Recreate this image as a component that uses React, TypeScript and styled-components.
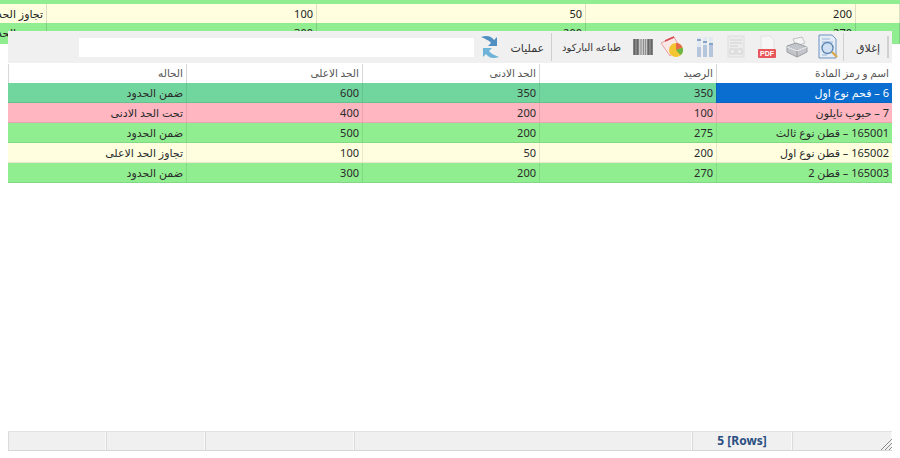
import React from "react";
import styled, { createGlobalStyle } from "styled-components";

const GlobalStyle = createGlobalStyle`
  html, body {
    margin: 0;
    padding: 0;
    background: #ffffff;
  }
  body {
    width: 900px;
    height: 458px;
    overflow: hidden;
    font-family: "Noto Sans", "DejaVu Sans", sans-serif;
    font-size: 11px;
    color: #222;
  }
`;

type Tone = "green" | "yellow" | "pink" | "selected";

const toneColor: Record<Tone, string> = {
  green: "#90ee90",
  yellow: "#ffffe0",
  pink: "#ffb6c1",
  selected: "#71d59e",
};

const rows: { tone: Tone; cells: string[] }[] = [
  { tone: "selected", cells: ["6 – فحم نوع اول", "350", "350", "600", "ضمن الحدود"] },
  { tone: "pink", cells: ["7 – حبوب نايلون", "100", "200", "400", "تحت الحد الادنى"] },
  { tone: "green", cells: ["165001 – قطن نوع ثالث", "275", "200", "500", "ضمن الحدود"] },
  { tone: "yellow", cells: ["165002 – قطن نوع اول", "200", "50", "100", "تجاوز الحد الاعلى"] },
  { tone: "green", cells: ["165003 – قطن 2", "270", "200", "300", "ضمن الحدود"] },
];

const headers = ["اسم و رمز المادة", "الرصيد", "الحد الادنى", "الحد الاعلى", "الحاله"];

const Desktop = styled.div`
  position: relative;
  width: 900px;
  height: 458px;
  overflow: hidden;
`;

const BackGreen = styled.div`
  height: 4px;
  background: #90ee90;
`;

const BackRow = styled.div<{ $tone: Tone; $h: number }>`
  display: grid;
  grid-template-columns: 47px 270px 269px 270px 44px;
  direction: ltr;
  height: ${(p) => p.$h}px;
  background: ${(p) => toneColor[p.$tone]};
`;

const BackCell = styled.div`
  border-right: 1px solid rgba(0, 0, 0, 0.13);
  padding-right: 3px;
  text-align: right;
  line-height: 19px;
  white-space: nowrap;
  overflow: hidden;
  font-size: 11px;
`;

const BackStatus = styled(BackCell)`
  direction: rtl;
  text-align: right;
`;

const Window = styled.div`
  position: absolute;
  left: 8px;
  top: 31px;
  width: 884px;
  height: 420px;
  background: #ffffff;
  display: flex;
  flex-direction: column;
  direction: rtl;
`;

const Toolbar = styled.div`
  display: flex;
  align-items: center;
  height: 32px;
  background: #f0f0f0;
  padding-right: 3px;
  flex-shrink: 0;
`;

const Grip = styled.span`
  width: 2px;
  height: 22px;
  background: #d0d0d0;
  flex-shrink: 0;
`;

const ToolText = styled.span`
  padding: 0 7px;
  white-space: nowrap;
  font-size: 11px;
  color: #333;
`;

const CloseText = styled(ToolText)`
  padding-left: 12px;
`;

const BarcodeText = styled(ToolText)`
  font-size: 10px;
  width: 60px;
  padding: 0 8px 0 9px;
  flex-shrink: 0;
`;

const Sep = styled.span`
  width: 1px;
  height: 28px;
  background: #cfcfcf;
  flex-shrink: 0;
`;

const IconSlot = styled.span<{ $w: number }>`
  display: inline-flex;
  justify-content: center;
  align-items: center;
  width: ${(p) => p.$w}px;
  height: 30px;
  flex-shrink: 0;
`;

const SearchInput = styled.div`
  width: 395px;
  height: 19px;
  margin-right: 3px;
  background: #ffffff;
`;

const Grid = styled.div`
  display: grid;
  grid-template-columns: 176px 177px 177px 176px 178px;
  flex-shrink: 0;
  margin-top: 1px;
`;

const Head = styled.div`
  height: 19px;
  line-height: 19px;
  padding-right: 3px;
  border-left: 1px solid #d8d8d8;
  font-size: 10.5px;
  color: #555;
  white-space: nowrap;
  &:last-child {
    border-left: none;
  }
`;

const Cell = styled.div<{ $tone: Tone; $active?: boolean }>`
  height: 20px;
  line-height: 19px;
  padding-right: 3px;
  box-sizing: border-box;
  background: ${(p) => (p.$active ? "#0a6ed1" : toneColor[p.$tone])};
  color: ${(p) => (p.$active ? "#ffffff" : "#2a2a2a")};
  border-left: 1px solid rgba(0, 0, 0, 0.09);
  border-bottom: 1px solid rgba(0, 0, 0, 0.09);
  white-space: nowrap;
  font-size: 11px;
  &:nth-child(5n) {
    border-left: none;
  }
`;

const Spacer = styled.div`
  flex: 1;
`;

const StatusBar = styled.div`
  display: grid;
  grid-template-columns: 100px 100px 338px 149px 99px 98px;
  direction: rtl;
  height: 20px;
  flex-shrink: 0;
  background: #f0f0f0;
  border-top: 1px solid #e2e2e2;
  border-bottom: 1px solid #d6d6d6;
  box-sizing: border-box;
  position: relative;
`;

const StatusCell = styled.div`
  border-left: 1px solid #dadada;
  border-right: 1px solid #fafafa;
  text-align: center;
  line-height: 18px;
  font-size: 12px;
  font-weight: 700;
  color: #2b4f81;
  direction: ltr;
`;

const ResizeGrip = styled.svg`
  position: absolute;
  right: 0;
  bottom: 0;
`;

const PreviewIcon = () => (
  <svg width="24" height="26" viewBox="0 0 24 26">
    <path d="M3 1h13l4 4v19H3z" fill="#e4edf7" stroke="#6e93bd" />
    <path d="M6 5h8M6 8h11M6 21h5" stroke="#9ab4d2" />
    <circle cx="11.5" cy="14" r="5.5" fill="#cfe0f2" stroke="#5f87b3" strokeWidth="1.4" />
    <path d="M16 18l5 5" stroke="#d9a94e" strokeWidth="2.4" />
  </svg>
);

const PrinterIcon = () => (
  <svg width="24" height="22" viewBox="0 0 24 22">
    <path d="M8 3l9-2 3 6-9 3z" fill="#f4f4f4" stroke="#c0c0c0" />
    <path d="M2 10l9-3 11 4v5l-10 5-10-5z" fill="#c2c6ca" stroke="#9a9ea2" />
    <path d="M2 11l10 4 10-4" fill="none" stroke="#ececec" />
    <path d="M12 15v6" stroke="#95999d" />
  </svg>
);

const PdfIcon = () => (
  <svg width="20" height="24" viewBox="0 0 20 24">
    <path d="M4 1h9l4 4v12H4z" fill="#f6f6f6" stroke="#e2e2e2" />
    <rect x="1" y="14" width="18" height="9" rx="1" fill="#e8555a" />
    <text x="10" y="21.2" fontSize="7" fontWeight="700" fill="#fff" textAnchor="middle" fontFamily="Liberation Sans, sans-serif" style={{ direction: "ltr" }}>
      PDF
    </text>
  </svg>
);

const FadedDocIcon = () => (
  <svg width="20" height="24" viewBox="0 0 20 24">
    <rect x="2" y="1" width="16" height="21" fill="#ececec" stroke="#dddddd" />
    <path d="M4 5h12M4 8h12M4 11h8" stroke="#d2d2d2" />
    <rect x="4" y="14" width="5" height="5" fill="none" stroke="#d2d2d2" />
    <rect x="11" y="14" width="5" height="5" fill="none" stroke="#d2d2d2" />
  </svg>
);

const ColumnsIcon = () => (
  <svg width="20" height="24" viewBox="0 0 20 24">
    {[2, 8, 14].map((x, i) => (
      <g key={x}>
        <rect x={x} y="2" width="4" height="20" fill="#e2e8f0" />
        <rect x={x} y={12 - i * 2} width="4" height={10 + i * 2} fill="#b4c5dc" />
        <rect x={x} y={4 + i * 2} width="4" height="2" fill="#86a2c6" />
      </g>
    ))}
  </svg>
);

const ChartIcon = () => (
  <svg width="26" height="24" viewBox="0 0 26 24">
    <path d="M1 8l13-6 4 7-8 12z" fill="#fbe8e6" stroke="#e9a0a0" />
    <path d="M5 6l9-4" stroke="#d8474a" strokeWidth="1.8" />
    <circle cx="16" cy="15" r="7" fill="#f2c531" />
    <path d="M16 15V8a7 7 0 0 1 6.5 4.5z" fill="#e8694a" />
    <path d="M16 15l6.5-2.5a7 7 0 0 1-2 7.8z" fill="#6cb644" />
  </svg>
);

const BarcodeIcon = () => (
  <svg width="20" height="16" viewBox="0 0 20 16">
    <rect x="0" y="0" width="20" height="16" fill="#c9c9c9" />
    <path d="M1.5 0v16M4.5 0v16M15.5 0v16M18.5 0v16" stroke="#666666" strokeWidth="2.4" />
    <path d="M8 0v16M10.5 0v16M12.5 0v16" stroke="#8e8e8e" strokeWidth="1" />
  </svg>
);

const RefreshIcon = () => (
  <svg width="22" height="26" viewBox="0 0 22 26">
    <path d="M2 3c6-2 10-1 13 3l3-3v9h-9l3-3C10 6 6 5 2 3z" fill="#4f8fc2" />
    <path d="M20 23c-6 2-10 1-13-3l-3 3v-9h9l-3 3c2 3 6 4 10 6z" fill="#6db4d8" />
  </svg>
);

export default function App() {
  return (
    <Desktop>
      <GlobalStyle />
      <BackGreen />
      <BackRow $tone="yellow" $h={19}>
        <BackStatus>تجاوز الحد الاعلى</BackStatus>
        <BackCell>100</BackCell>
        <BackCell>50</BackCell>
        <BackCell>200</BackCell>
        <BackCell />
      </BackRow>
      <BackRow $tone="green" $h={21}>
        <BackStatus>ضمن الحدود</BackStatus>
        <BackCell>300</BackCell>
        <BackCell>200</BackCell>
        <BackCell>270</BackCell>
        <BackCell />
      </BackRow>
      <Window>
        <Toolbar>
          <Grip />
          <CloseText>إغلاق</CloseText>
          <Sep />
          <IconSlot $w={30}><PreviewIcon /></IconSlot>
          <IconSlot $w={32}><PrinterIcon /></IconSlot>
          <IconSlot $w={29}><PdfIcon /></IconSlot>
          <IconSlot $w={32}><FadedDocIcon /></IconSlot>
          <IconSlot $w={31}><ColumnsIcon /></IconSlot>
          <IconSlot $w={33}><ChartIcon /></IconSlot>
          <IconSlot $w={27}><BarcodeIcon /></IconSlot>
          <BarcodeText>طباعه الباركود</BarcodeText>
          <Sep />
          <ToolText>عمليات</ToolText>
          <IconSlot $w={26}><RefreshIcon /></IconSlot>
          <SearchInput />
        </Toolbar>
        <Grid>
          {headers.map((h) => (
            <Head key={h}>{h}</Head>
          ))}
          {rows.map((row, r) =>
            row.cells.map((c, i) => (
              <Cell key={`${r}-${i}`} $tone={row.tone} $active={r === 0 && i === 0}>
                {c}
              </Cell>
            ))
          )}
        </Grid>
        <Spacer />
        <StatusBar>
          <StatusCell />
          <StatusCell>5 [Rows]</StatusCell>
          <StatusCell />
          <StatusCell />
          <StatusCell />
          <StatusCell />
          <ResizeGrip width="12" height="12" viewBox="0 0 12 12">
            <path d="M1 12L12 1M5 12l7-7M9 12l3-3" stroke="#8a8a8a" strokeWidth="1" />
          </ResizeGrip>
        </StatusBar>
      </Window>
    </Desktop>
  );
}
